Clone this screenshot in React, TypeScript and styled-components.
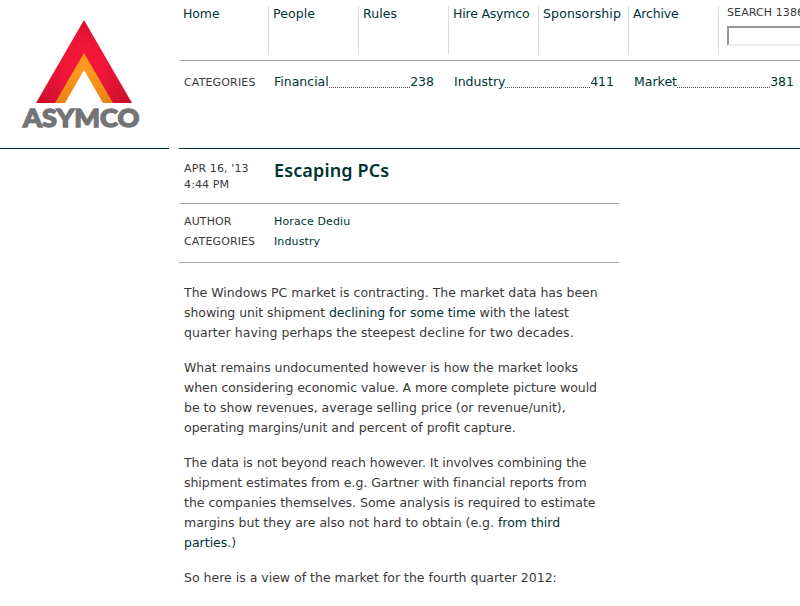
import React from 'react';
import styled, { createGlobalStyle } from 'styled-components';

const Global = createGlobalStyle`
  * { box-sizing: border-box; }
  html, body { margin: 0; background: #fff; overflow: hidden; }
  body { font: 12.5px/20px "DejaVu Sans", Verdana, sans-serif; color: #3a3a3a; }
  a { color: #033; text-decoration: none; }
`;
const Page = styled.div`width: 100%; height: 606px; overflow: hidden;`;
const Header = styled.header`display: flex; gap: 10px; height: 149px;`;
const Brand = styled.a`flex: none; width: 169px; border-bottom: 1px solid #033; svg { display: block; }`;
const HeaderMain = styled.div`flex: 1; min-width: 0; overflow: hidden; border-bottom: 1px solid #033;`;
const Nav = styled.nav`display: flex; height: 61px; padding-top: 6px; border-bottom: 1px solid #aaa;`;
const NavItem = styled.a<{ $track: number }>`
  flex: none; width: 90px; height: 48px; padding-left: 4px; line-height: 16px;
  border-right: 1px solid #ddd; white-space: nowrap;
  letter-spacing: ${p => p.$track}px;
`;
const Search = styled.label`
  flex: 1; min-width: 0; padding-left: 8px; white-space: nowrap; overflow: hidden;
  font-size: 11px; line-height: 13px; letter-spacing: 0.1px;
`;
const SearchInput = styled.input`
  display: block; width: 150px; height: 20px; margin-top: 7px; padding: 1px;
  border-style: solid; border-width: 2px; border-color: #999 #eee #eee #999; background: #fff;
`;
const Categories = styled.div`display: flex; padding: 11px 0 0 5px;`;
const Caption = styled.div`
  flex: none; width: 90px; padding-top: 1px;
  font-size: 11px; line-height: 20px; letter-spacing: 0.15px;
`;
const Category = styled.a`
  flex: none; display: flex; width: 160px; margin-right: 20px;
`;
const Leader = styled.span`flex: 1; height: 16px; border-bottom: 1px dotted #444;`;
const Article = styled.article`width: 440px; margin-left: 179px;`;
const Heading = styled.div`display: flex; height: 55px; padding: 11px 0 0 5px; border-bottom: 1px solid #aaa;`;
const Stamp = styled.time`width: 90px; padding-top: 1px; font-size: 11px; line-height: 16px; letter-spacing: 0.13px;`;
const Title = styled.h1`margin: -1px 0 0; font: 600 18px/22px "Noto Sans", sans-serif; letter-spacing: 0.13px; color: #033;`;
const Meta = styled.div`height: 59px; padding: 8px 0 0 5px; border-bottom: 1px solid #aaa;`;
const MetaRow = styled.div`display: flex; height: 20px; font-size: 11px; letter-spacing: 0.12px;`;
const MetaLabel = styled.span`width: 90px;`;
const Body = styled.div`padding: 20px 0 0 5px; p { margin: 0 0 15px; }`;
const Line = styled.span<{ $track?: number }>`
  display: block; white-space: nowrap; letter-spacing: ${p => p.$track ?? 0}px;
`;

const Logo = () => (
  <svg width="169" height="148" viewBox="0 0 169 148" role="img" aria-label="Asymco">
    <defs>
      <radialGradient id="red" gradientUnits="userSpaceOnUse" cx="84" cy="65" r="60">
        <stop offset="0.3" stopColor="#f21638" /><stop offset="1" stopColor="#c80f2b" />
      </radialGradient>
      <linearGradient id="orange" x1="0" y1="0" x2="0" y2="1">
        <stop offset="0.4" stopColor="#ff981f" /><stop offset="1" stopColor="#e58214" />
      </linearGradient>
    </defs>
    <path fill="url(#red)" d="M84 20 132 103H36Z" />
    <path fill="url(#orange)" d="M84 53 113 103H55Z" />
    <path fill="#fff" d="M84 70 103 103H65Z" />
    <text x="23" y="127.3" textLength="116.5" lengthAdjust="spacingAndGlyphs" fontFamily="Lato" fontWeight="900" fontSize="25.5" fill="#747476" stroke="#747476" strokeWidth="1.3">ASYMCO</text>
  </svg>
);

const nav: [string, number][] = [
  ['Home', -0.1], ['People', 0.1], ['Rules', 0.1], ['Hire Asymco', -0.2], ['Sponsorship', 0.13], ['Archive', -0.2],
];
const categories: [string, number][] = [['Financial', 238], ['Industry', 411], ['Market', 381]];

export default function App() {
  return (
    <Page>
      <Global />
      <Header>
        <Brand href="#"><Logo /></Brand>
        <HeaderMain>
          <Nav>
            {nav.map(([name, track]) => <NavItem href="#" key={name} $track={track}>{name}</NavItem>)}
            <Search>SEARCH 1386<SearchInput /></Search>
          </Nav>
          <Categories>
            <Caption>CATEGORIES</Caption>
            {categories.map(([name, count]) => <Category href="#" key={name}>{name}<Leader />{count}</Category>)}
          </Categories>
        </HeaderMain>
      </Header>
      <Article>
        <Heading>
          <Stamp>APR 16, '13<br />4:44 PM</Stamp>
          <Title>Escaping PCs</Title>
        </Heading>
        <Meta>
          <MetaRow><MetaLabel>AUTHOR</MetaLabel><a href="#">Horace Dediu</a></MetaRow>
          <MetaRow><MetaLabel>CATEGORIES</MetaLabel><a href="#">Industry</a></MetaRow>
        </Meta>
        <Body>
          <p>
            <Line>The Windows PC market is contracting. The market data has been</Line>
            <Line $track={-0.06}>showing unit shipment <a href="#">declining for some time</a> with the latest</Line>
            <Line $track={0.05}>quarter having perhaps the steepest decline for two decades.</Line>
          </p>
          <p>
            <Line $track={-0.04}>What remains undocumented however is how the market looks</Line>
            <Line $track={-0.06}>when considering economic value. A more complete picture would</Line>
            <Line $track={-0.02}>be to show revenues, average selling price (or revenue/unit),</Line>
            <Line>operating margins/unit and percent of profit capture.</Line>
          </p>
          <p>
            <Line $track={-0.05}>The data is not beyond reach however. It involves combining the</Line>
            <Line $track={-0.05}>shipment estimates from e.g. Gartner with financial reports from</Line>
            <Line $track={-0.01}>the companies themselves. Some analysis is required to estimate</Line>
            <Line>margins but they are also not hard to obtain (e.g. <a href="#">from third</a></Line>
            <Line><a href="#">parties</a>.)</Line>
          </p>
          <p><Line>So here is a view of the market for the fourth quarter 2012:</Line></p>
        </Body>
      </Article>
    </Page>
  );
}
